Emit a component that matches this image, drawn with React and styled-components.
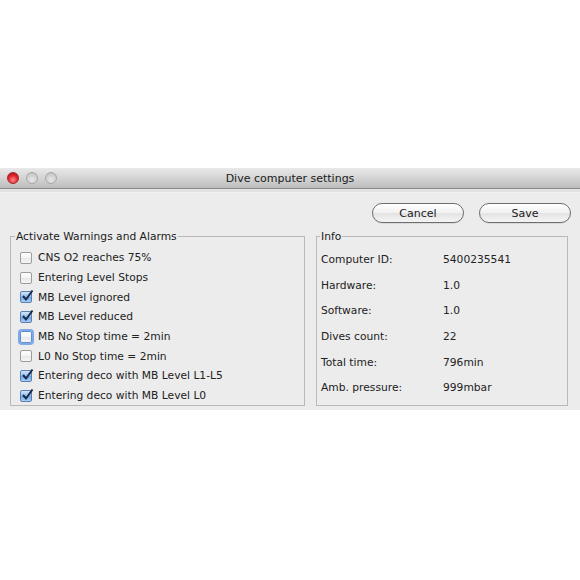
import styled, { createGlobalStyle } from 'styled-components';

const GlobalStyle = createGlobalStyle`
    html, body {
        margin: 0;
        padding: 0;
        background: #ffffff;
    }
    body {
        font-family: "DejaVu Sans", "Liberation Sans", sans-serif;
        font-size: 10.7px;
        color: #222;
    }
`;

const Page = styled.div`
    width: 580px;
    height: 580px;
    padding-top: 168px;
    box-sizing: border-box;
`;

const Window = styled.div`
    width: 580px;
    background: #ececec;
    padding-bottom: 4px;
`;

const TitleBar = styled.div`
    position: relative;
    height: 20px;
    display: flex;
    align-items: center;
    justify-content: center;
    background: linear-gradient(#e9e9e9, #d4d4d4 50%, #bcbcbc);
    border-bottom: 1px solid #8c8c8c;
    font-size: 11px;
    color: #1a1a1a;
`;

const Lights = styled.div`
    position: absolute;
    left: 7px;
    top: 4px;
    display: flex;
    gap: 7px;
`;

const Light = styled.span`
    width: 12px;
    height: 12px;
    border-radius: 50%;
    box-sizing: border-box;
    border: 1px solid ${p => (p.$red ? '#a3262a' : '#a9a9a9')};
    background: ${p =>
        p.$red
            ? 'radial-gradient(circle at 50% 70%, #ff8b8b, #e0212a 55%, #9c1118)'
            : 'radial-gradient(circle at 50% 70%, #e6e6e6, #cfcfcf 60%, #b5b5b5)'};
`;

const Stripe = styled.div`
    height: 3px;
    background: #e2e2e2;
    border-bottom: 1px solid #f2f2f2;
`;

const Content = styled.div`
    padding: 10px 9px 0 10px;
`;

const ButtonBar = styled.div`
    display: flex;
    justify-content: flex-end;
    gap: 15px;
`;

const Button = styled.button`
    width: 92px;
    height: 20px;
    border: 1px solid #6e6e6e;
    border-radius: 10px;
    background: linear-gradient(#ffffff, #f1f1f1 50%, #e3e3e3 51%, #f4f4f4);
    font-family: inherit;
    font-size: 11px;
    color: #1a1a1a;
    padding: 0;
    box-shadow: 0 1px 0 rgba(0, 0, 0, 0.08);
`;

const Groups = styled.div`
    display: flex;
    gap: 11px;
    margin-top: 7px;
    margin-right: 3px;
`;

const Group = styled.fieldset`
    margin: 0;
    width: ${p => p.$width}px;
    box-sizing: border-box;
    border: 1px solid #b9b9b9;
    padding: ${p => p.$pad};
    height: 176px;
    overflow: hidden;
`;

const Legend = styled.legend`
    padding: 0 1px;
    margin-left: ${p => p.$offset}px;
    font-size: 10.7px;
    color: #1a1a1a;
`;

const CheckList = styled.div`
    display: flex;
    flex-direction: column;
`;

const CheckRow = styled.label`
    height: 19.7px;
    display: flex;
    align-items: center;
    gap: 6px;
`;

const Box = styled.span`
    width: 12px;
    height: 12px;
    box-sizing: border-box;
    border-radius: 2px;
    position: relative;
    border: 1px solid ${p => (p.$checked ? '#5a7fb0' : p.$focus ? '#5f8fd4' : '#9c9c9c')};
    background: ${p =>
        p.$checked
            ? 'linear-gradient(#d3e6fb, #8fbbec 50%, #6aa3e6 51%, #a9d0f7)'
            : 'linear-gradient(#ffffff, #f3f3f3 50%, #e8e8e8 51%, #f6f6f6)'};
    box-shadow: ${p => (p.$focus ? '0 0 0 2px #7fa9e6' : 'none')};
`;

const Tick = styled.svg`
    position: absolute;
    left: 0px;
    top: -3px;
`;

const InfoRow = styled.div`
    height: 25.6px;
    display: flex;
    align-items: center;
`;

const InfoLabel = styled.span`
    width: 122px;
`;

const alarms = [
    { text: 'CNS O2 reaches 75%', checked: false },
    { text: 'Entering Level Stops', checked: false },
    { text: 'MB Level ignored', checked: true },
    { text: 'MB Level reduced', checked: true },
    { text: 'MB No Stop time = 2min', checked: false, focus: true },
    { text: 'L0 No Stop time = 2min', checked: false },
    { text: 'Entering deco with MB Level L1-L5', checked: true },
    { text: 'Entering deco with MB Level L0', checked: true },
];

const info = [
    ['Computer ID:', '5400235541'],
    ['Hardware:', '1.0'],
    ['Software:', '1.0'],
    ['Dives count:', '22'],
    ['Total time:', '796min'],
    ['Amb. pressure:', '999mbar'],
];

const Check = ({ checked, focus }) => (
    <Box $checked={checked} $focus={focus}>
        {checked && (
            <Tick width="13" height="13" viewBox="0 0 13 13">
                <path d="M2 7 L5 10.5 L11.5 1.5" fill="none" stroke="#1c2c4a" strokeWidth="2" />
            </Tick>
        )}
    </Box>
);

const App = () => {
    return (
        <Page>
            <GlobalStyle />
            <Window>
                <TitleBar>
                    <Lights>
                        <Light $red />
                        <Light />
                        <Light />
                    </Lights>
                    Dive computer settings
                </TitleBar>
                <Stripe />
                <Content>
                    <ButtonBar>
                        <Button>Cancel</Button>
                        <Button>Save</Button>
                    </ButtonBar>
                    <Groups>
                        <Group $width={295} $pad="5px 8px 0 9px">
                            <Legend $offset={-5}>Activate Warnings and Alarms</Legend>
                            <CheckList>
                                {alarms.map(a => (
                                    <CheckRow key={a.text}>
                                        <Check checked={a.checked} focus={a.focus} />
                                        {a.text}
                                    </CheckRow>
                                ))}
                            </CheckList>
                        </Group>
                        <Group $width={252} $pad="4px 8px 0 4px">
                            <Legend $offset={-1}>Info</Legend>
                            {info.map(([label, value]) => (
                                <InfoRow key={label}>
                                    <InfoLabel>{label}</InfoLabel>
                                    {value}
                                </InfoRow>
                            ))}
                        </Group>
                    </Groups>
                </Content>
            </Window>
        </Page>
    );
};

export default App;
